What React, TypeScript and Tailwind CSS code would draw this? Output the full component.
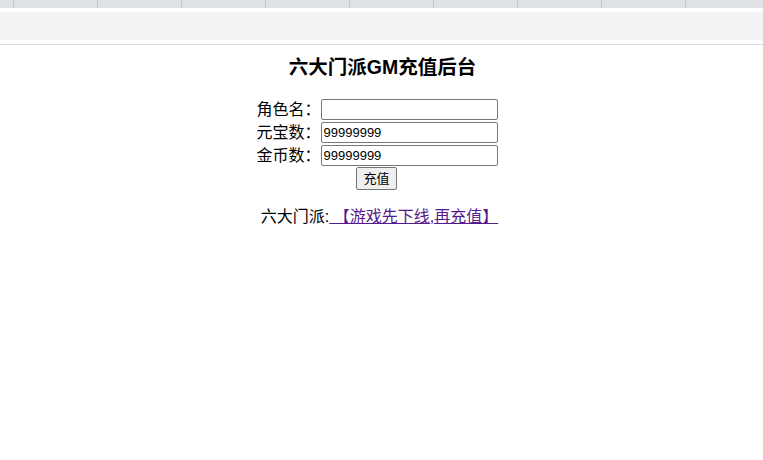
export default function App() {
  const ticks = [14, 98, 182, 266, 350, 434, 518, 602, 686];
  const f = { fontFamily: '"Liberation Sans","Noto Sans CJK SC",sans-serif' };
  return (
    <div className="w-[763px] h-[460px] bg-white text-black" style={f}>
      <div className="h-[8px] bg-[#dee1e6] flex">
        {ticks.map((t, i) => (
          <div key={i} className="w-[84px] h-[8px] border-r border-[#c4c7cc] first:w-[14px]" />
        ))}
      </div>
      <div className="h-[4px]" />
      <div className="h-[28px] bg-[#f1f3f4]" />
      <div className="h-[4px]" />
      <div className="h-[1px] bg-[#dadce0]" />
      <div className="flex flex-col items-center">
        <h1 className="text-[19.5px] font-bold mt-[10px] leading-[25px] ml-[2px]">六大门派GM充值后台</h1>
        <div className="mt-[19px] flex flex-col gap-[2px] ml-[-10px]">
          {[["角色名：", ""], ["元宝数：", "99999999"], ["金币数：", "99999999"]].map(([l, v]) => (
            <div key={l} className="flex items-center h-[21px]">
              <span className="text-[16px] w-[65px] text-right leading-[21px]">{l}</span>
              <input defaultValue={v} className="w-[177px] h-[21px] border border-[#767676] rounded-[2px] px-[2px] text-[13px] leading-none" style={f} />
            </div>
          ))}
        </div>
        <button className="mt-[1px] -ml-[winding] -ml-[10px] h-[23px] px-[6px] text-[13px] border border-[#767676] rounded-[2px] bg-[#efefef]" style={f}>充值</button>
        <div className="mt-[17px] text-[16px] leading-[20px] -ml-[4px]">
          六大门派:<a href="#" className="text-[#551a8b] underline"> 【游戏先下线,再充值】</a>
        </div>
      </div>
    </div>
  );
}
